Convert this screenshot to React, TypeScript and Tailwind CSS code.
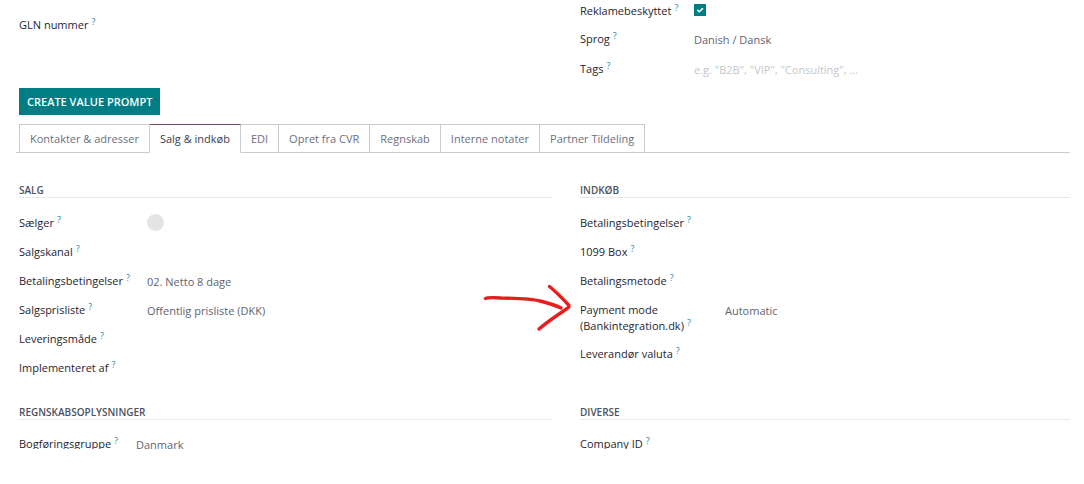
import { useState, type ReactNode } from "react";
import clsx from "clsx";

const tabs = [
  "Kontakter & adresser",
  "Salg & indkøb",
  "EDI",
  "Opret fra CVR",
  "Regnskab",
  "Interne notater",
  "Partner Tildeling",
];

const Help = () => (
  <sup className="relative -top-1 ml-[3px] align-baseline text-[9px] leading-none font-medium text-[#2187b0]">
    ?
  </sup>
);

const inputClass =
  "block h-4 w-full appearance-none bg-transparent p-0 text-[11px] leading-4 text-[#5f636f] outline-none placeholder:text-[#c3c6cc]";

type FieldProps = {
  id: string;
  label: ReactNode;
  value?: string;
  placeholder?: string;
  labelWidth?: string;
  className?: string;
  children?: ReactNode;
};

const Field = ({
  id,
  label,
  value = "",
  placeholder,
  labelWidth = "w-32",
  className = "py-1.5",
  children,
}: FieldProps) => (
  <div className={clsx("flex items-start", className)}>
    <label
      htmlFor={id}
      className={clsx("shrink-0 text-[11px] leading-4 font-medium text-[#1f2530]", labelWidth)}
    >
      {label}
      <Help />
    </label>
    <div className="min-w-0 flex-1 pt-px">
      {children ?? (
        <input id={id} type="text" defaultValue={value} placeholder={placeholder} className={inputClass} />
      )}
    </div>
  </div>
);

const SectionTitle = ({ children }: { children: ReactNode }) => (
  <h2 className="mb-[11px] border-b border-[#e7e9ed] text-[10px] leading-[14px] font-semibold text-[#4b515e] uppercase">
    {children}
  </h2>
);

const Arrow = () => (
  <svg
    className="pointer-events-none absolute -top-3 right-full mr-1 h-12 w-24"
    viewBox="480 284 96 48"
    fill="none"
    stroke="#e81e1e"
    strokeWidth="3.4"
    strokeLinecap="round"
    strokeLinejoin="round"
    aria-hidden="true"
  >
    <path d="M485.500 298.500C487 297.200 494 297.600 501 298C519 298.300 533 299 540 301C548 303 555 305 561 308" />
    <path d="M549.500 286.500C555 291 564 300 569 305.500C569.500 307 568 308 565 310C556 316 546 323 539 329" />
  </svg>
);

const columns = "grid grid-cols-[533fr_490fr] gap-x-7";

const App = () => {
  const [active, setActive] = useState("Salg & indkøb");

  return (
    <main className="bg-white pr-3.5 pl-4 font-['Open_Sans',sans-serif]">
      <div className={clsx(columns, "pl-[3px]")}>
        <div className="pt-[11px]">
          <Field id="gln" label="GLN nummer" />
        </div>
        <div className="h-[88px]">
          <Field id="protected" label="Reklamebeskyttet" labelWidth="w-[114px]" className="pt-[3px] pb-3">
            <span className="relative block size-3">
              <input
                id="protected"
                type="checkbox"
                defaultChecked
                className="peer block size-3 appearance-none border border-[#017e84] checked:bg-[#017e84]"
              />
              <svg
                viewBox="0 0 12 12"
                className="pointer-events-none absolute inset-0 hidden size-3 peer-checked:block"
                fill="none"
                stroke="white"
                strokeWidth="1.5"
                strokeLinecap="round"
                strokeLinejoin="round"
              >
                <path d="M3.700 6.200L5.300 7.800L8.500 4.600" />
              </svg>
            </span>
          </Field>
          <Field id="language" label="Sprog" labelWidth="w-[114px]" className="pb-[13px]">
            <select id="language" className={inputClass}>
              <option>Danish / Dansk</option>
            </select>
          </Field>
          <Field
            id="tags"
            label="Tags"
            labelWidth="w-[114px]"
            className="pb-3"
            placeholder={'e.g. "B2B", "VIP", "Consulting", ...'}
          />
        </div>
      </div>

      <div className="pl-[3px]">
        <button
          type="button"
          className="block h-[27px] bg-[#017e84] px-2 pt-0.5 text-[11px] font-semibold text-white uppercase"
        >
          Create value prompt
        </button>
      </div>

      <div role="tablist" className="mt-[9px] flex border-b border-[#c9cbd4] pl-[3px]">
        {tabs.map((tab) => (
          <button
            key={tab}
            type="button"
            role="tab"
            aria-selected={tab === active}
            onClick={() => setActive(tab)}
            className={clsx(
              "-mb-px h-[29px] border border-l-0 px-2.5 pt-px text-[11px] whitespace-nowrap first:border-l",
              tab === active
                ? "border-t-[#714b67] border-r-[#c9cbd4] border-b-white bg-white text-[#374151]"
                : "border-[#c9cbd4] text-[#6b7080]",
            )}
          >
            {tab}
          </button>
        ))}
      </div>

      <div className={clsx(columns, "pt-[30px] pl-[3px]")}>
        <section>
          <SectionTitle>Salg</SectionTitle>
          <Field id="seller" label="Sælger" className="pt-1.5 pb-[7px]">
            <span className="-mt-0.5 -mb-px block size-[17px] rounded-full bg-[#e4e4e4]" />
          </Field>
          <Field id="channel" label="Salgskanal" />
          <Field id="terms" label="Betalingsbetingelser" value="02. Netto 8 dage" />
          <Field id="pricelist" label="Salgsprisliste" value="Offentlig prisliste (DKK)" />
          <Field id="delivery" label="Leveringsmåde" />
          <Field id="implemented" label="Implementeret af" />
        </section>
        <section>
          <SectionTitle>Indkøb</SectionTitle>
          <Field id="purchase-terms" label="Betalingsbetingelser" labelWidth="w-[145px]" />
          <Field id="box" label="1099 Box" labelWidth="w-[145px]" />
          <Field id="method" label="Betalingsmetode" labelWidth="w-[145px]" />
          <div className="relative">
            <Arrow />
            <Field
              id="mode"
              label={
                <>
                  Payment mode
                  <br />
                  (Bankintegration.dk)
                </>
              }
              value="Automatic"
              labelWidth="w-[145px]"
            />
          </div>
          <Field id="currency" label="Leverandør valuta" labelWidth="w-[145px]" />
        </section>
      </div>

      <div className={clsx(columns, "pt-[22px] pl-[3px]")}>
        <section>
          <SectionTitle>Regnskabsoplysninger</SectionTitle>
          <div className="h-[18px] overflow-hidden">
            <Field id="group" label="Bogføringsgruppe" value="Danmark" labelWidth="w-[117px]" className="pt-[5px]" />
          </div>
        </section>
        <section>
          <SectionTitle>Diverse</SectionTitle>
          <div className="h-[18px] overflow-hidden">
            <Field id="company" label="Company ID" labelWidth="w-[145px]" className="pt-[5px]" />
          </div>
        </section>
      </div>
    </main>
  );
};

export default App;
